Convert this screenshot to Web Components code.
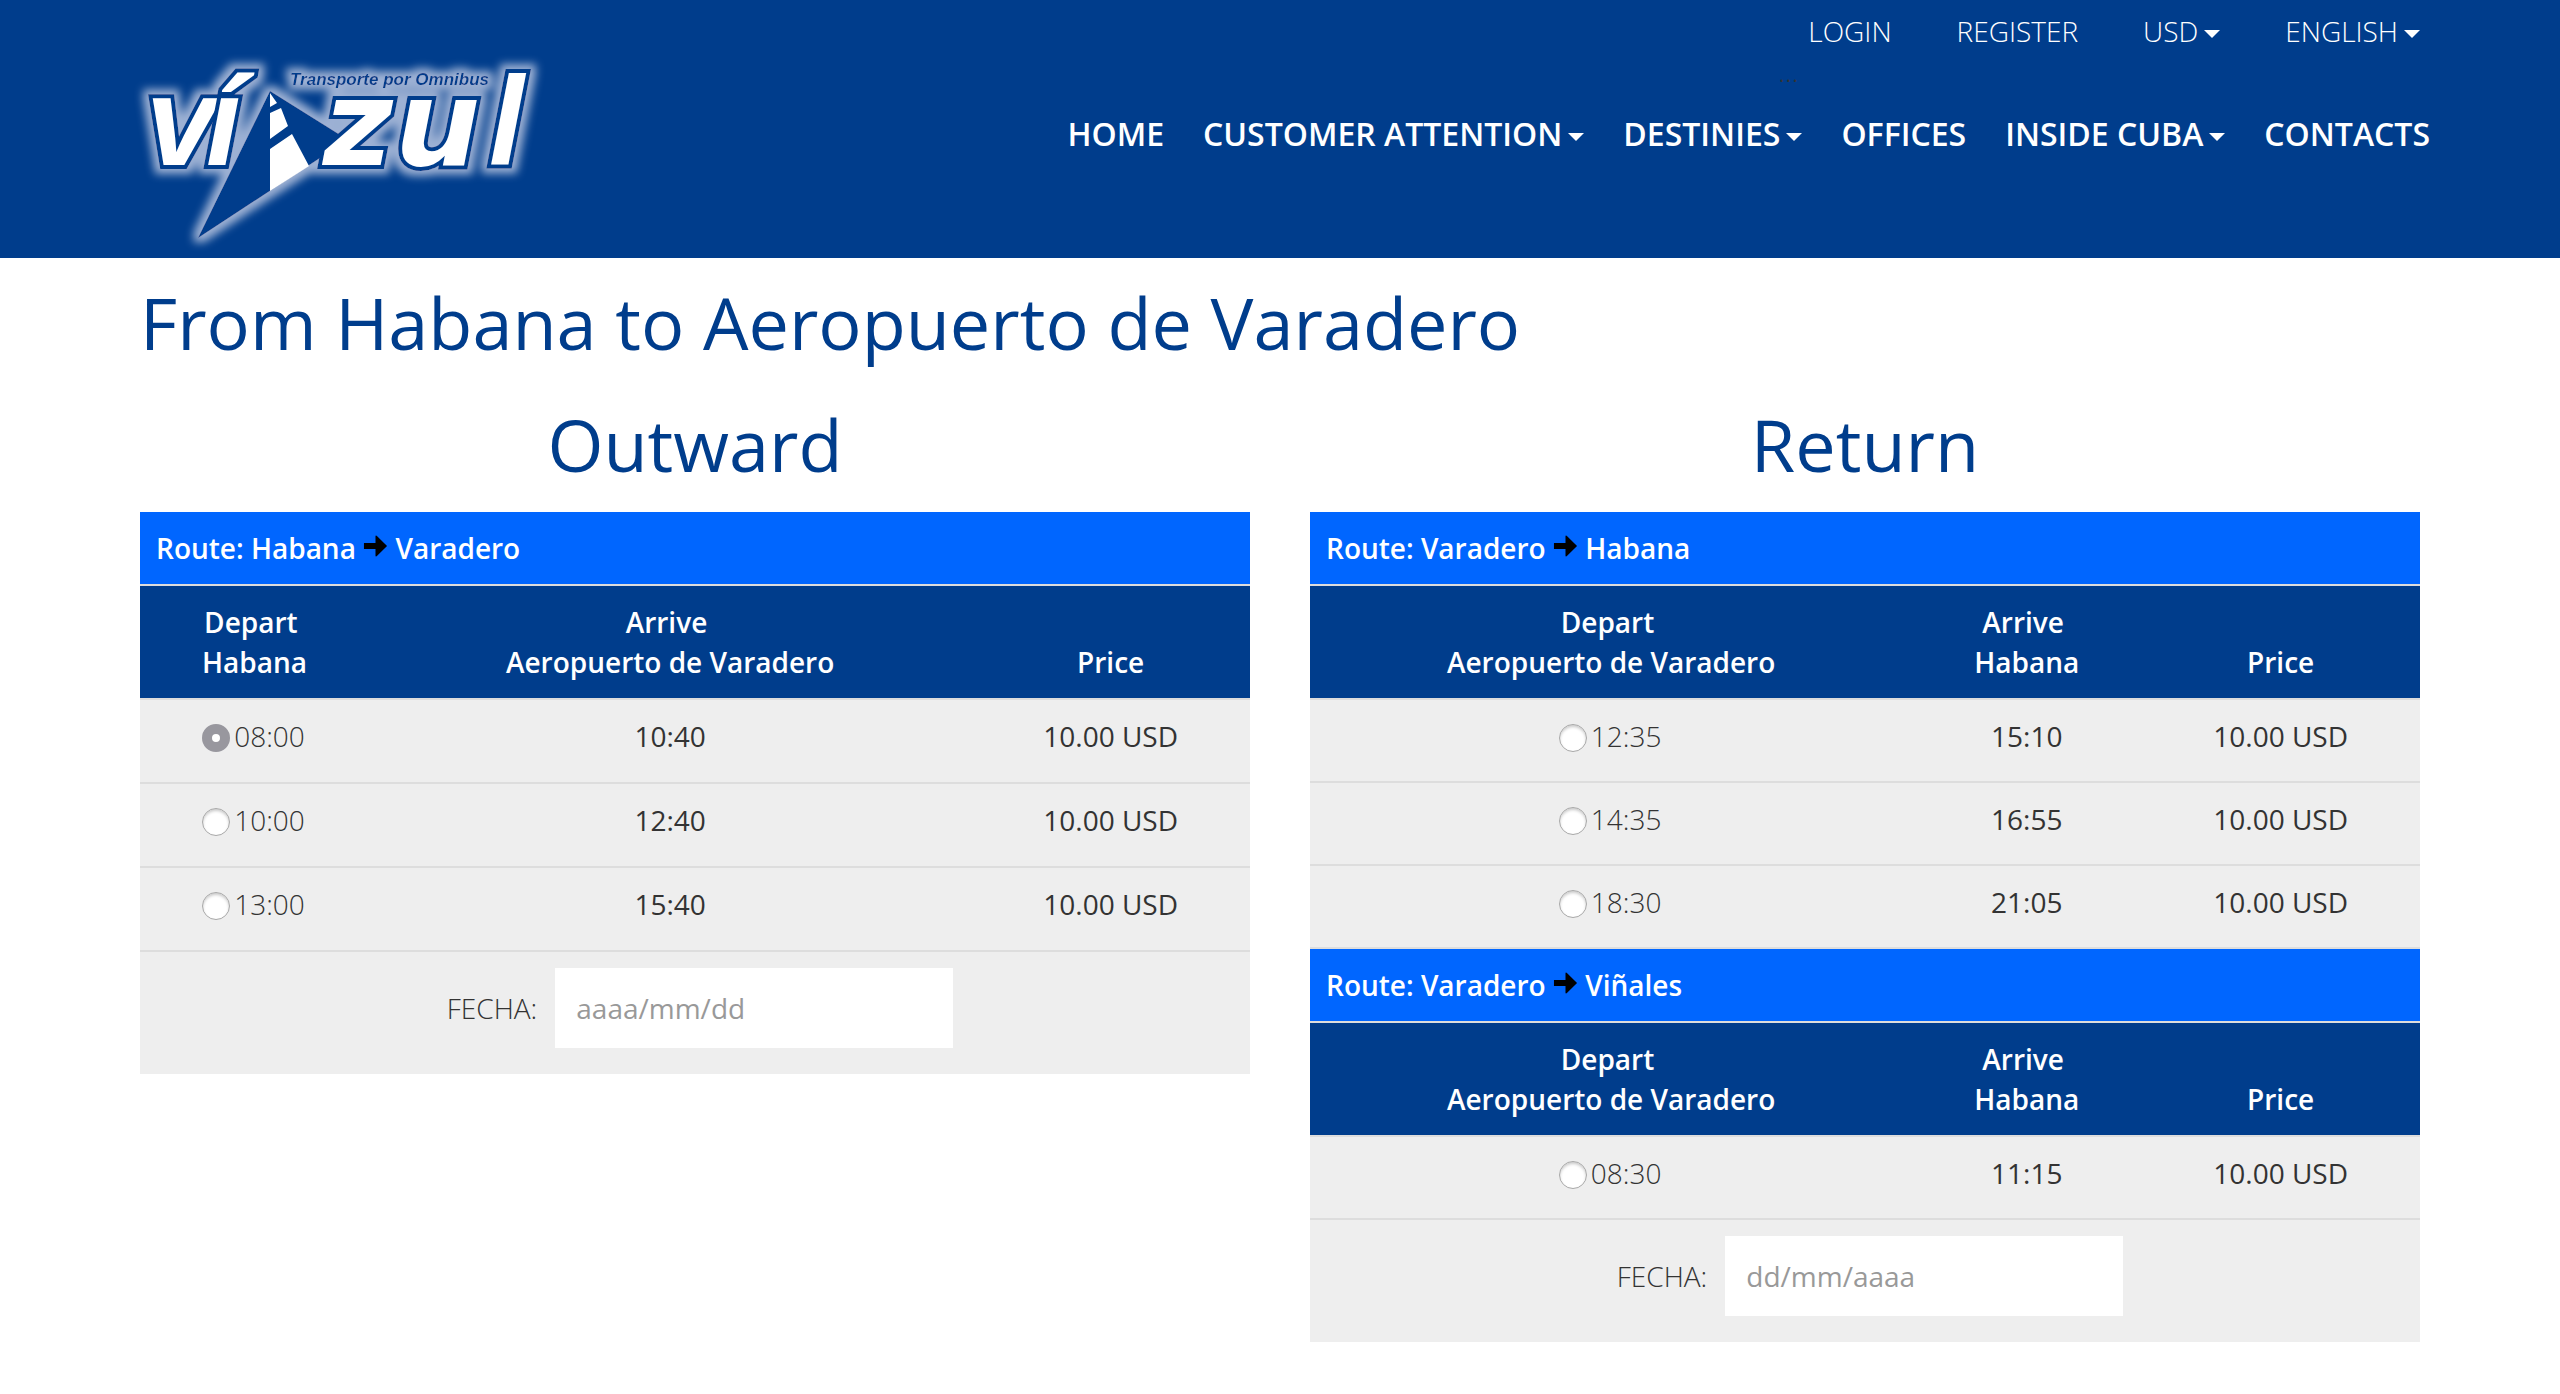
<!DOCTYPE html>
<html lang="en">
<head>
<meta charset="utf-8">
<title>Viazul</title>
<style>
  body { margin: 0; background: #fff; color: #333; font: 28px/40px "Open Sans", "Noto Sans", sans-serif; }
</style>
</head>
<body>
<site-page>
  <site-header slot="header"></site-header>
  <span slot="title">From Habana to Aeropuerto de Varadero</span>
  <fare-table id="outward" placeholder="aaaa/mm/dd" style="--row: 50px">Outward</fare-table>
  <fare-table id="return" placeholder="dd/mm/aaaa" style="--row: 49px">Return</fare-table>
</site-page>

<script>
const define = (name, html, setup) => {
  const template = document.createElement('template');
  template.innerHTML = html;
  customElements.define(name, class extends HTMLElement {
    connectedCallback() {
      if (this.shadowRoot) return;
      this.attachShadow({ mode: 'open' }).append(template.content.cloneNode(true));
      if (setup) setup(this);
    }
  });
};

const trips = {
  outward: [
    { from: 'Habana', to: 'Varadero', depart: 'Habana', arrive: 'Aeropuerto de Varadero',
      rows: [['08:00', '10:40'], ['10:00', '12:40'], ['13:00', '15:40']] }
  ],
  return: [
    { from: 'Varadero', to: 'Habana', depart: 'Aeropuerto de Varadero', arrive: 'Habana',
      rows: [['12:35', '15:10'], ['14:35', '16:55'], ['18:30', '21:05']] },
    { from: 'Varadero', to: 'Viñales', depart: 'Aeropuerto de Varadero', arrive: 'Habana',
      rows: [['08:30', '11:15']] }
  ]
};

define('site-logo', `
  <style>
    :host { display: block; flex: none; }
    svg { display: block; overflow: visible; }
    .name { font: italic bold 126px "Liberation Sans", Arial, sans-serif; fill: #fff; stroke: #003d8c; stroke-width: 8px; paint-order: stroke; stroke-linejoin: miter; }
    .wide { font: italic bold 120px "DejaVu Sans", Verdana, sans-serif; }
    .tag { font: italic bold 17px "Liberation Sans", Arial, sans-serif; fill: #003d8c; }
  </style>
  <svg width="400" height="184" viewBox="0 0 400 184" role="img" aria-label="Víazul">
    <defs>
      <filter id="glow" x="-20" y="-20" width="440" height="224" filterUnits="userSpaceOnUse">
        <feMorphology in="SourceAlpha" operator="dilate" radius="5"/>
        <feGaussianBlur stdDeviation="4" result="halo"/>
        <feFlood flood-color="#9db1d4"/>
        <feComposite in2="halo" operator="in" result="glow"/>
        <feMerge><feMergeNode in="glow"/><feMergeNode in="SourceGraphic"/></feMerge>
      </filter>
    </defs>
    <g filter="url(#glow)">
      <text class="name" x="6 66" y="105">ví</text>
      <path fill="#003d8c" d="M130 31 205 78 180 98 58 178Z"/>
      <path fill="#fff" d="M130 33 137 43 130 47ZM130 53 141 48 148 66 130 79ZM130 89 152 74 169 106 130 131Z"/>
      <text class="name" y="105"><tspan class="wide" x="183 255">zu</tspan><tspan x="349">l</tspan></text>
      <text class="tag" x="150" y="25">Transporte por Omnibus</text>
    </g>
  </svg>`);

const navCss = `
  a, button { font: inherit; color: #fff; text-decoration: none; text-transform: uppercase; background: none; border: 0; padding: 0; margin: 0; display: flex; align-items: center; gap: 6px; white-space: nowrap; cursor: pointer; }
  .menu::after { content: ""; border: 8px solid transparent; border-top-color: #fff; border-bottom: 0; margin-top: 6px; }`;

define('top-nav', `
  <style>
    :host { display: block; font-weight: 300; }
    nav { display: flex; gap: 65px; padding-left: 30px; }
    ${navCss}
  </style>
  <nav aria-label="Account">
    <a href="#login">Login</a>
    <a href="#register">Register</a>
    <button class="menu" type="button">USD</button>
    <button class="menu" type="button">English</button>
  </nav>
  <div>...</div>`);

define('main-nav', `
  <style>
    :host { display: block; font-size: 32px; font-weight: 600; line-height: 44px; }
    nav { display: flex; gap: 39px; }
    ${navCss}
  </style>
  <nav aria-label="Main">
    <a href="#home">Home</a>
    <button class="menu" type="button">Customer attention</button>
    <button class="menu" type="button">Destinies</button>
    <a href="#offices">Offices</a>
    <button class="menu" type="button">Inside Cuba</button>
    <a href="#contacts">Contacts</a>
  </nav>`);

define('site-header', `
  <style>
    :host { display: block; background: #003d8c; }
    .bar { max-width: 2280px; margin: 0 auto; display: flex; justify-content: space-between; }
    site-logo { padding: 60px 0 14px; }
    .navs { display: flex; flex-direction: column; align-items: flex-end; padding-top: 11px; }
    main-nav { margin: 21px -10px 0 0; }
  </style>
  <header class="bar">
    <site-logo></site-logo>
    <div class="navs"><top-nav></top-nav><main-nav></main-nav></div>
  </header>`);

define('fare-table', `
  <style>
    :host { display: block; flex: 1; min-width: 0; }
    h2 { margin: 0 0 28px; font-size: 72px; line-height: 80px; font-weight: 400; color: #003d8c; text-align: center; }
    form { margin: 0; background: #eee; }
    table { width: 100%; border-collapse: separate; border-spacing: 0; text-align: center; }
    th, td { padding: 16px; vertical-align: top; }
    th { font-weight: 600; color: #fff; }
    .route { background: #06f; text-align: left; border-bottom: 2px solid #ddd; }
    .route svg { width: 25px; height: 24px; vertical-align: 1px; }
    .head th { background: #003d8c; vertical-align: bottom; border-bottom: 2px solid #ddd; }
    td { height: var(--row); border-bottom: 2px solid #ddd; }
    label { font-weight: 300; }
    td label { display: inline-flex; align-items: flex-start; gap: 4px; margin-right: 2px; }
    input[type=radio] { appearance: none; width: 28px; height: 28px; margin: 8px 0 0; border-radius: 50%; background: #fff; border: 1px solid #a8a8a8; box-shadow: inset 0 2px 3px #ccc; }
    input[type=radio]:checked { border: 10px solid #98979e; box-shadow: none; }
    .date { display: flex; justify-content: center; align-items: center; gap: 18px; padding: 16px 16px 26px 26px; }
    .date input { box-sizing: border-box; width: 398px; height: 80px; padding: 0 21px; border: 0; background: #fff; color: #555; font: inherit; }
    .date input::placeholder { color: #999; opacity: 1; }
  </style>
  <h2><slot></slot></h2>
  <form>
    <table></table>
    <div class="date"><label for="date">FECHA:</label><input id="date" type="text"></div>
  </form>`, host => {
  const root = host.shadowRoot;
  const arrow = '<svg viewBox="0 0 26 24" aria-hidden="true"><path d="M1 9H13V2Q13 0 15 2L25 12 15 22Q13 24 13 22V15H1Z"/></svg>';
  root.querySelector('table').innerHTML = trips[host.id].map((trip, t) => `
    <tbody>
      <tr><th class="route" colspan="3">Route: ${trip.from} ${arrow} ${trip.to}</th></tr>
      <tr class="head"><th>Depart&nbsp;<br>${trip.depart}</th><th>Arrive&nbsp;<br>${trip.arrive}</th><th>Price</th></tr>
      ${trip.rows.map(([depart, arrive], r) => `
        <tr><td><label><input type="radio" name="trip" ${host.id === 'outward' && t + r === 0 ? 'checked' : ''}>${depart}</label></td><td>${arrive}</td><td>10.00 USD</td></tr>`).join('')}
    </tbody>`).join('');
  root.querySelector('#date').placeholder = host.getAttribute('placeholder');
});

define('site-page', `
  <style>
    :host { display: block; }
    main { max-width: 2280px; margin: 0 auto; padding: 24px 0 40px; }
    h1 { margin: 0 0 42px; font-size: 72px; line-height: 80px; font-weight: 400; color: #003d8c; }
    .columns { display: flex; gap: 60px; align-items: flex-start; }
  </style>
  <slot name="header"></slot>
  <main>
    <h1><slot name="title"></slot></h1>
    <div class="columns"><slot></slot></div>
  </main>`);
</script>
</body>
</html>
